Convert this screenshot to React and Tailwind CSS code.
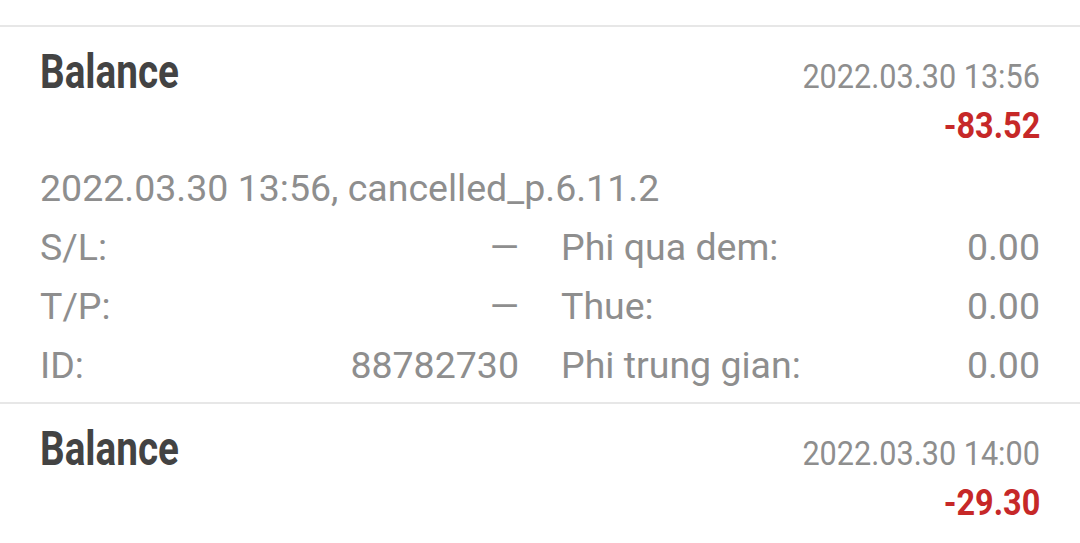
import React from "react";

const font = { fontFamily: "Roboto, 'Noto Sans', sans-serif" };

function Header({ date, amount }) {
  return (
    <div className="flex justify-between items-start">
      <span className="inline-block origin-left scale-x-[0.805] text-[48px] leading-[46px] font-bold text-[#434343]">
        Balance
      </span>
      <div className="flex flex-col items-end pt-[10px]">
        <span className="inline-block origin-right scale-x-[0.9] text-[34px] leading-[34px] text-[#8e8e8e]">
          {date}
        </span>
        <span className="inline-block origin-right scale-x-[0.9] mt-[15px] text-[36px] leading-[36px] font-bold text-[#c62828]">
          {amount}
        </span>
      </div>
    </div>
  );
}

function Cell({ label, value }) {
  return (
    <div className="flex justify-between">
      <span>{label}</span>
      <span>{value}</span>
    </div>
  );
}

export default function App() {
  return (
    <div className="w-[1080px] h-[543px] bg-white overflow-hidden" style={font}>
      <div className="h-[25px]" />
      <div className="h-[2px] bg-[#e7e7e7]" />
      <div className="px-[40px] pt-[22px] pb-[7px]">
        <Header date="2022.03.30 13:56" amount="-83.52" />
        <div className="mt-[15px] text-[37.5px] leading-[59px] text-[#8e8e8e]">
          <div>2022.03.30 13:56, cancelled_p.6.11.2</div>
          <div className="grid grid-cols-2 gap-x-[42px]">
            <Cell label="S/L:" value="—" />
            <Cell label="Phi qua dem:" value="0.00" />
            <Cell label="T/P:" value="—" />
            <Cell label="Thue:" value="0.00" />
            <Cell label="ID:" value="88782730" />
            <Cell label="Phi trung gian:" value="0.00" />
          </div>
        </div>
      </div>
      <div className="h-[2px] bg-[#e7e7e7]" />
      <div className="px-[40px] pt-[22px]">
        <Header date="2022.03.30 14:00" amount="-29.30" />
      </div>
    </div>
  );
}
